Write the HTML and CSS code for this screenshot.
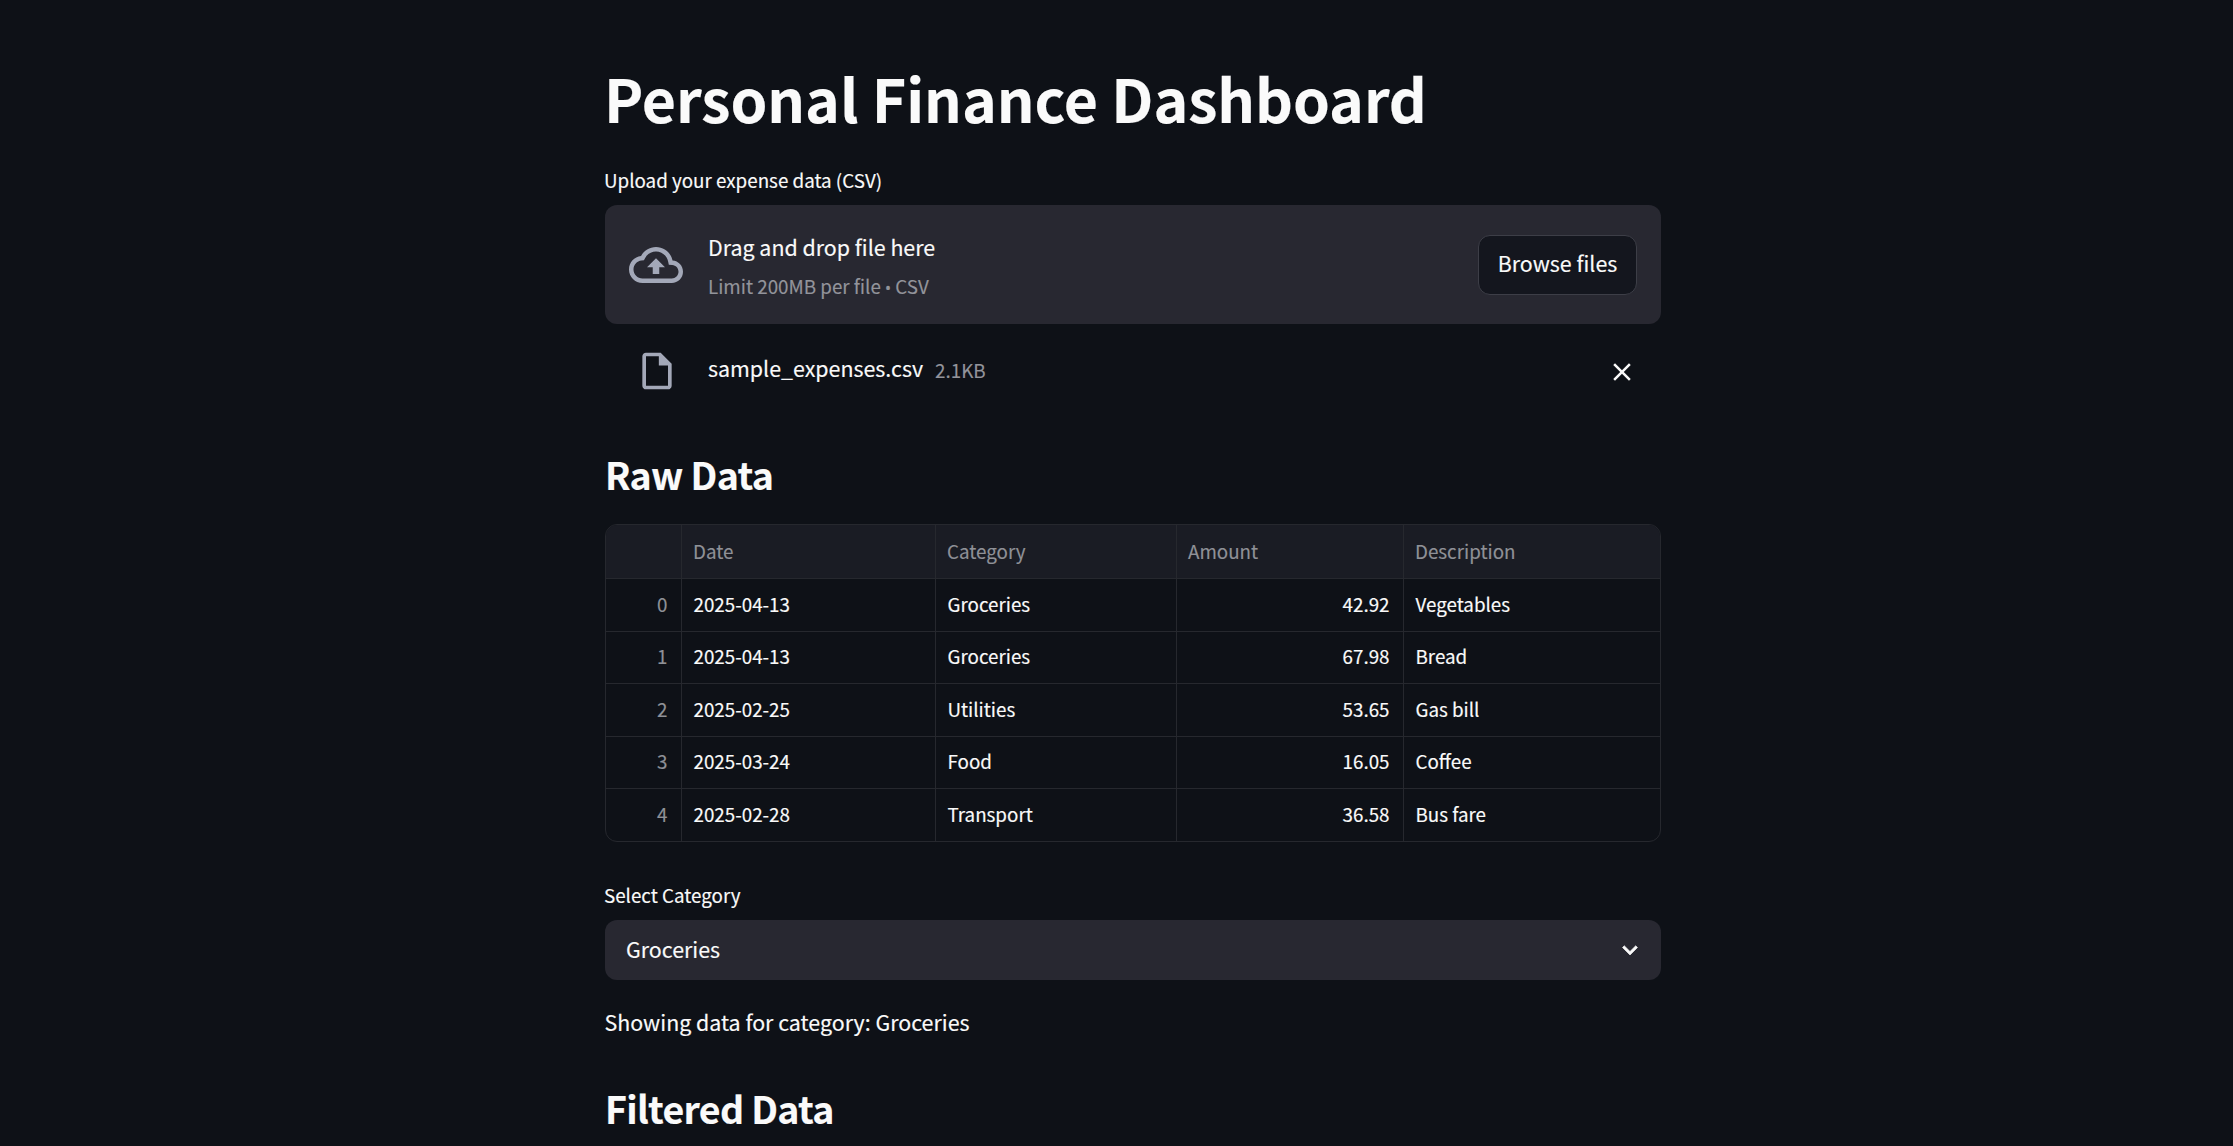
FILE: index.html
```html
<!DOCTYPE html>
<html>
<head>
<meta charset="utf-8">
<title>Personal Finance Dashboard</title>
<link rel="stylesheet" href="styles.css">
</head>
<body>
<main class="main">
	<h1 class="title">Personal Finance Dashboard</h1>

	<label class="label">Upload your expense data (CSV)</label>
	<section class="dropzone">
		<svg class="icon-cloud" viewBox="0 0 24 24"><path d="M19.35 10.04C18.67 6.59 15.64 4 12 4 9.11 4 6.6 5.64 5.35 8.04 2.34 8.36 0 10.91 0 14c0 3.31 2.69 6 6 6h13c2.76 0 5-2.24 5-5 0-2.64-2.05-4.78-4.65-4.96zM19 18H6c-2.21 0-4-1.79-4-4 0-2.05 1.53-3.76 3.56-3.97l1.07-.11.5-.95C8.08 7.14 9.94 6 12 6c2.62 0 4.88 1.86 5.39 4.43l.3 1.5 1.53.11c1.56.1 2.78 1.41 2.78 2.96 0 1.65-1.35 3-3 3zM8 13h2.55v3h2.9v-3H16l-4-4z"/></svg>
		<div class="drop-text">
			<div class="drop-title">Drag and drop file here</div>
			<div class="drop-hint">Limit 200MB per file <span class="bullet">•</span> CSV</div>
		</div>
		<button class="browse">Browse files</button>
	</section>

	<div class="file-row">
		<svg class="icon-file" viewBox="0 0 24 24"><path d="M14 2H6c-1.1 0-1.99.9-1.99 2L4 20c0 1.1.89 2 1.99 2H18c1.1 0 2-.9 2-2V8l-6-6zM6 20V4h7v5h5v11H6z"/></svg>
		<span class="file-name">sample_expenses.csv</span>
		<span class="file-size">2.1KB</span>
		<svg class="icon-close" viewBox="0 0 24 24"><path d="M19 6.41L17.59 5 12 10.59 6.41 5 5 6.41 10.59 12 5 17.59 6.41 19 12 13.41 17.59 19 19 17.59 13.41 12z"/></svg>
	</div>

	<h3 class="heading raw-heading">Raw Data</h3>
	<div class="table-wrap">
		<table class="data">
			<colgroup>
				<col class="col-index"><col class="col-date"><col class="col-category"><col class="col-amount"><col>
			</colgroup>
			<thead>
				<tr><th></th><th>Date</th><th>Category</th><th>Amount</th><th>Description</th></tr>
			</thead>
			<tbody>
				<tr><td class="index">0</td><td>2025-04-13</td><td>Groceries</td><td class="num">42.92</td><td>Vegetables</td></tr>
				<tr><td class="index">1</td><td>2025-04-13</td><td>Groceries</td><td class="num">67.98</td><td>Bread</td></tr>
				<tr><td class="index">2</td><td>2025-02-25</td><td>Utilities</td><td class="num">53.65</td><td>Gas bill</td></tr>
				<tr><td class="index">3</td><td>2025-03-24</td><td>Food</td><td class="num">16.05</td><td>Coffee</td></tr>
				<tr><td class="index">4</td><td>2025-02-28</td><td>Transport</td><td class="num">36.58</td><td>Bus fare</td></tr>
			</tbody>
		</table>
	</div>

	<label class="label select-label">Select Category</label>
	<div class="select">
		<span class="select-value">Groceries</span>
		<svg class="icon-chevron" viewBox="0 0 24 24"><path d="M16.59 8.59L12 13.17 7.41 8.59 6 10l6 6 6-6z"/></svg>
	</div>

	<p class="showing">Showing data for category: Groceries</p>

	<h3 class="heading">Filtered Data</h3>
</main>
</body>
</html>
```

FILE: styles.css
```css
html, body {
	margin: 0;
	height: 100%;
	overflow: hidden;
	background: #0e1117;
}

body {
	color: #fafafa;
	font-family: "Noto Sans CJK SC", "Noto Sans", sans-serif;
	-webkit-text-stroke: 0.15px;
}

.main {
	width: 1056px;
	margin-left: 605px;
	padding-top: 58px;
}

.title {
	margin: 0 0 0 -1px;
	font-size: 59px;
	line-height: 80px;
	font-weight: 700;
	letter-spacing: -0.05px;
}

.label {
	display: block;
	margin-top: 26px;
	margin-left: -1px;
	font-size: 18.8px;
	line-height: 32px;
}

.dropzone {
	display: flex;
	align-items: center;
	height: 119px;
	margin-top: 9px;
	padding: 0 24px;
	box-sizing: border-box;
	background: #282831;
	border-radius: 12px;
}

.icon-cloud {
	width: 54px;
	height: 54px;
	margin-right: 24px;
	fill: #a3a8b8;
}

.drop-text {
	flex: 1;
	margin-left: 1px;
	padding-top: 3px;
}

.drop-title {
	font-size: 21.4px;
	line-height: 36px;
}

.drop-hint {
	margin-top: 6px;
	font-size: 18.8px;
	line-height: 30px;
	color: #93949b;
}

.bullet {
	font-family: "Noto Sans", sans-serif;
	font-size: 16px;
}

.browse {
	width: 159px;
	height: 60px;
	padding: 0 0 5px;
	background: #14161e;
	border: 1.5px solid #3d3e47;
	border-radius: 12px;
	color: #fafafa;
	font-family: inherit;
	font-size: 21.4px;
}

.file-row {
	display: flex;
	align-items: center;
	height: 60px;
	margin-top: 17px;
	padding: 0 24px 0 30px;
}

.icon-file {
	width: 44px;
	height: 44px;
	margin-right: 29px;
	fill: #a3a8b8;
}

.file-name {
	margin-bottom: 6px;
	font-size: 21.4px;
	line-height: 36px;
}

.file-size {
	margin-left: 12px;
	margin-bottom: 2px;
	font-size: 18.8px;
	line-height: 36px;
	color: #93949b;
}

.icon-close {
	width: 30px;
	height: 30px;
	margin-top: 1px;
	margin-left: auto;
	fill: #fafafa;
}

.heading {
	margin: 0;
	font-size: 37.5px;
	line-height: 56px;
	font-weight: 600;
	letter-spacing: -0.68px;
}

.raw-heading {
	margin-top: 45px;
}

.table-wrap {
	margin-top: 22px;
	border: 1.5px solid #26282e;
	border-radius: 12px;
	overflow: hidden;
}

.data {
	width: 100%;
	table-layout: fixed;
	border-collapse: collapse;
	font-size: 18.8px;
}

.col-index { width: 75px; }
.col-date { width: 254px; }
.col-category { width: 241px; }
.col-amount { width: 227px; }

.data th, .data td {
	height: 52.5px;
	padding: 0 13px 3px 12px;
	box-sizing: border-box;
	border-left: 1.5px solid #26282e;
	border-top: 1.5px solid #26282e;
	text-align: left;
	font-weight: 400;
}

.data th:first-child, .data td:first-child {
	border-left: 0;
}

.data thead th {
	height: 53.5px;
	padding-left: 11.5px;
	border-top: 0;
	background: #1a1c24;
	color: #8f9197;
}

.data .index {
	text-align: right;
	color: #8f9197;
}

.data .num {
	text-align: right;
}

.select-label {
	margin-top: 37px;
}

.select {
	display: flex;
	align-items: center;
	justify-content: space-between;
	height: 60px;
	margin-top: 9px;
	padding: 0 16px 0 21px;
	box-sizing: border-box;
	background: #282831;
	border-radius: 12px;
	font-size: 21.4px;
}

.select-value {
	margin-bottom: 3px;
}

.icon-chevron {
	width: 30px;
	height: 30px;
	fill: #fafafa;
	stroke: #fafafa;
	stroke-width: 0.5;
}

.showing {
	margin: 24px 0 0 -0.5px;
	font-size: 21.4px;
	line-height: 36px;
}

.showing + .heading {
	margin-top: 40px;
}
```
